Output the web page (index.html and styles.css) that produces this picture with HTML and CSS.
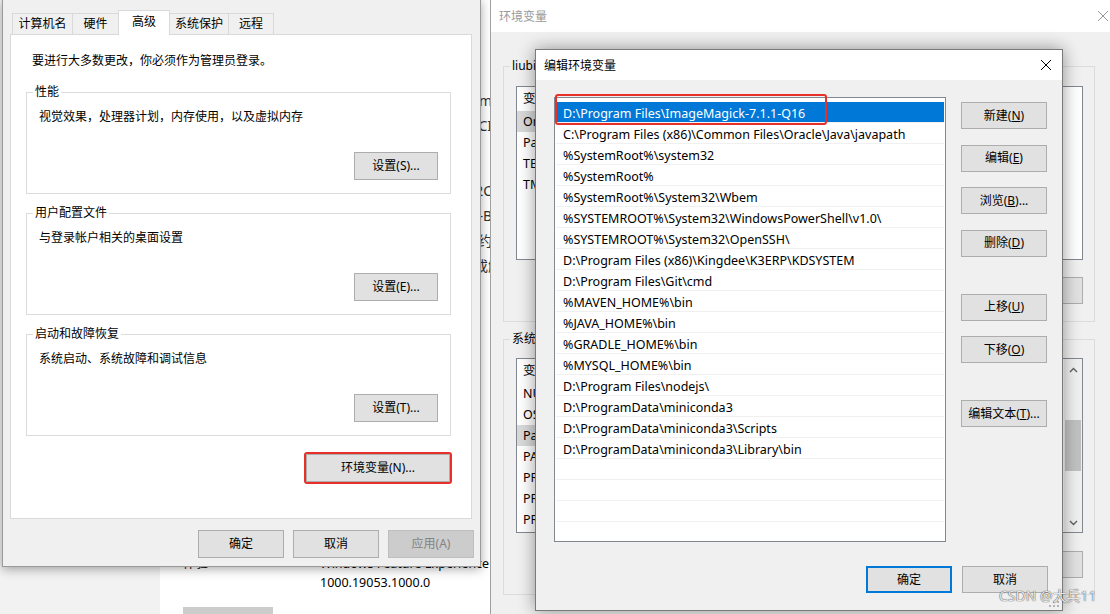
FILE: index.html
```html
<!DOCTYPE html>
<html lang="zh-CN">
<head>
    <meta charset="UTF-8">
    <meta name="viewport" content="width=device-width, initial-scale=1.0">
    <title>编辑环境变量</title>
    <link rel="stylesheet" href="styles.css">
</head>
<body>
<div class="desktop">

    <!-- Settings app behind everything -->
    <div class="settings">
        <div class="settings-nav"></div>
        <div class="settings-main">
            <div class="spec"><span class="spec-label">设备名称</span><span class="spec-value">liubing@outlook.com</span></div>
            <div class="spec"><span class="spec-label">处理器</span><span class="spec-value">2.50GHz CPU CI</span></div>
            <div class="spec spec-gap"><span class="spec-label">设备 ID</span><span class="spec-value">7A2C</span></div>
            <div class="spec"><span class="spec-label">产品 ID</span><span class="spec-value">00342-AAOEM-B</span></div>
            <div class="spec"><span class="spec-label">系统类型</span><span class="spec-value">基于 x64 的约</span></div>
            <div class="spec"><span class="spec-label">笔和触控</span><span class="spec-value">没有可用于此显示器的笔或触控成</span></div>
            <div class="experience">
                <span class="spec-label">体验</span>
                <span>Windows Feature Experience Pack<br>1000.19053.1000.0</span>
            </div>
            <div class="copy-btn"></div>
        </div>
    </div>

    <!-- System properties dialog -->
    <div class="sys-dialog">
        <div class="tabs">
            <div class="tab">计算机名</div>
            <div class="tab">硬件</div>
            <div class="tab active">高级</div>
            <div class="tab">系统保护</div>
            <div class="tab">远程</div>
        </div>
        <div class="tab-panel">
            <p class="note">要进行大多数更改，你必须作为管理员登录。</p>

            <fieldset class="group">
                <legend>性能</legend>
                <p class="group-desc">视觉效果，处理器计划，内存使用，以及虚拟内存</p>
                <div class="group-actions"><button class="btn">设置(S)...</button></div>
            </fieldset>

            <fieldset class="group">
                <legend>用户配置文件</legend>
                <p class="group-desc">与登录帐户相关的桌面设置</p>
                <div class="group-actions"><button class="btn">设置(E)...</button></div>
            </fieldset>

            <fieldset class="group">
                <legend>启动和故障恢复</legend>
                <p class="group-desc">系统启动、系统故障和调试信息</p>
                <div class="group-actions"><button class="btn">设置(T)...</button></div>
            </fieldset>

            <div class="panel-actions">
                <span class="mark"><button class="btn btn-env">环境变量(N)...</button></span>
            </div>
        </div>
        <div class="dialog-actions">
            <button class="btn btn-bottom">确定</button>
            <button class="btn btn-bottom">取消</button>
            <button class="btn btn-bottom" disabled>应用(A)</button>
        </div>
    </div>

    <!-- Environment variables window -->
    <div class="env-window">
        <div class="titlebar inactive">
            <span class="title">环境变量</span>
            <svg class="close" width="12" height="12" viewBox="0 0 12 12"><path d="M1 1L11 11M11 1L1 11" stroke="currentColor" stroke-width="1"/></svg>
        </div>
        <div class="env-body">
            <fieldset class="env-group">
                <legend>liubing 的用户变量(U)</legend>
                <div class="var-list user-list">
                    <div class="var-rows">
                        <div class="var-row head"><span>变量</span><span>值</span></div>
                        <div class="var-row picked"><span>OneDrive</span><span>C:\Users\liubing\OneDrive</span></div>
                        <div class="var-row"><span>Path</span><span>C:\Users\liubing\AppData\Local\Microsoft\WindowsApps;</span></div>
                        <div class="var-row"><span>TEMP</span><span>%USERPROFILE%\AppData\Local\Temp</span></div>
                        <div class="var-row"><span>TMP</span><span>%USERPROFILE%\AppData\Local\Temp</span></div>
                    </div>
                </div>
                <div class="var-actions">
                    <button class="btn btn-var">新建(N)...</button>
                    <button class="btn btn-var">编辑(E)...</button>
                    <button class="btn btn-var">删除(D)</button>
                </div>
            </fieldset>

            <fieldset class="env-group">
                <legend>系统变量(S)</legend>
                <div class="var-list sys-list">
                    <div class="var-rows">
                        <div class="var-row head"><span>变量</span><span>值</span></div>
                        <div class="var-row"><span>NUMBER_OF_PROCESSORS</span><span>8</span></div>
                        <div class="var-row"><span>OS</span><span>Windows_NT</span></div>
                        <div class="var-row picked"><span>Path</span><span>D:\Program Files\ImageMagick-7.1.1-Q16;C:\Program Files (x86)</span></div>
                        <div class="var-row"><span>PATHEXT</span><span>.COM;.EXE;.BAT;.CMD;.VBS;.VBE;.JS;.JSE;.WSF;.WSH;.MSC</span></div>
                        <div class="var-row"><span>PROCESSOR_ARCHITECTURE</span><span>AMD64</span></div>
                        <div class="var-row"><span>PROCESSOR_IDENTIFIER</span><span>Intel64 Family 6 Model 158 Stepping 10</span></div>
                        <div class="var-row"><span>PROCESSOR_LEVEL</span><span>6</span></div>
                    </div>
                    <div class="scrollbar">
                        <svg width="9" height="6" viewBox="0 0 9 6"><path d="M1 5L4.5 1.5L8 5" fill="none" stroke="#606060" stroke-width="1.4"/></svg>
                        <div class="track"><div class="thumb"></div></div>
                        <svg width="9" height="6" viewBox="0 0 9 6"><path d="M1 1L4.5 4.5L8 1" fill="none" stroke="#606060" stroke-width="1.4"/></svg>
                    </div>
                </div>
                <div class="var-actions">
                    <button class="btn btn-var">新建(W)...</button>
                    <button class="btn btn-var">编辑(I)...</button>
                    <button class="btn btn-var">删除(L)</button>
                </div>
            </fieldset>
        </div>
    </div>

    <!-- Edit environment variable dialog -->
    <div class="edit-dialog">
        <div class="titlebar">
            <span class="title">编辑环境变量</span>
            <svg class="close" width="12" height="12" viewBox="0 0 12 12"><path d="M1 1L11 11M11 1L1 11" stroke="currentColor" stroke-width="1"/></svg>
        </div>
        <div class="edit-body">
            <div class="edit-main">
                <div class="list-wrap">
                    <div class="path-list">
                        <div class="path-row selected">D:\Program Files\ImageMagick-7.1.1-Q16</div>
                        <div class="path-row">C:\Program Files (x86)\Common Files\Oracle\Java\javapath</div>
                        <div class="path-row">%SystemRoot%\system32</div>
                        <div class="path-row">%SystemRoot%</div>
                        <div class="path-row">%SystemRoot%\System32\Wbem</div>
                        <div class="path-row">%SYSTEMROOT%\System32\WindowsPowerShell\v1.0\</div>
                        <div class="path-row">%SYSTEMROOT%\System32\OpenSSH\</div>
                        <div class="path-row">D:\Program Files (x86)\Kingdee\K3ERP\KDSYSTEM</div>
                        <div class="path-row">D:\Program Files\Git\cmd</div>
                        <div class="path-row">%MAVEN_HOME%\bin</div>
                        <div class="path-row">%JAVA_HOME%\bin</div>
                        <div class="path-row">%GRADLE_HOME%\bin</div>
                        <div class="path-row">%MYSQL_HOME%\bin</div>
                        <div class="path-row">D:\Program Files\nodejs\</div>
                        <div class="path-row">D:\ProgramData\miniconda3</div>
                        <div class="path-row">D:\ProgramData\miniconda3\Scripts</div>
                        <div class="path-row">D:\ProgramData\miniconda3\Library\bin</div>
                        <div class="path-row"></div>
                        <div class="path-row"></div>
                        <div class="path-row"></div>
                        <div class="path-row"></div>
                    </div>
                    <div class="red-box"></div>
                </div>
                <div class="side-actions">
                    <button class="btn btn-side">新建(<u>N</u>)</button>
                    <button class="btn btn-side">编辑(<u>E</u>)</button>
                    <button class="btn btn-side">浏览(<u>B</u>)...</button>
                    <button class="btn btn-side">删除(<u>D</u>)</button>
                    <button class="btn btn-side spaced">上移(<u>U</u>)</button>
                    <button class="btn btn-side">下移(<u>O</u>)</button>
                    <button class="btn btn-side spaced">编辑文本(<u>T</u>)...</button>
                </div>
            </div>
            <div class="edit-footer">
                <button class="btn btn-side primary">确定</button>
                <button class="btn btn-side">取消</button>
            </div>
        </div>
        <svg class="grip" width="10" height="10" viewBox="0 0 10 10">
            <rect x="8" y="0" width="2" height="2" fill="#b4b4b4"/>
            <rect x="4" y="4" width="2" height="2" fill="#b4b4b4"/>
            <rect x="8" y="4" width="2" height="2" fill="#b4b4b4"/>
            <rect x="0" y="8" width="2" height="2" fill="#b4b4b4"/>
            <rect x="4" y="8" width="2" height="2" fill="#b4b4b4"/>
            <rect x="8" y="8" width="2" height="2" fill="#b4b4b4"/>
        </svg>
    </div>

    <div class="watermark">CSDN @大兵11</div>
</div>
</body>
</html>
```

FILE: styles.css
```css
* {
    box-sizing: border-box;
}
body {
    margin: 0;
}
.desktop {
    position: relative;
    width: 1110px;
    height: 614px;
    overflow: hidden;
    background: #fff;
    font-family: "Noto Sans", "Noto Sans CJK SC", sans-serif;
    font-size: 12px;
    color: #000;
}
p {
    margin: 0;
}
.btn {
    height: 28px;
    padding: 0;
    border: 1px solid #adadad;
    background: #e1e1e1;
    font: inherit;
    color: #000;
    line-height: 16px;
}
.btn:disabled {
    background: #cccccc;
    border-color: #bfbfbf;
    color: #838383;
}

/* settings app */
.settings {
    position: absolute;
    inset: 0;
    display: flex;
}
.settings-nav {
    width: 160px;
    background: #f2f2f2;
}
.settings-main {
    flex: 1;
    padding: 88px 0 0 23px;
    font-size: 14px;
    color: #333;
}
.spec {
    display: flex;
    height: 25px;
    line-height: 25px;
    white-space: nowrap;
}
.spec-gap {
    margin-top: 40px;
}
.spec-label {
    width: 137px;
    flex: none;
}
.spec-value {
    width: 172px;
    text-align: right;
    overflow: hidden;
}
.experience {
    display: flex;
    margin-top: 276px;
    font-size: 12.5px;
    line-height: 19px;
    color: #000;
}
.copy-btn {
    margin-top: 15px;
    width: 90px;
    height: 28px;
    background: #cccccc;
}

/* system properties */
.sys-dialog {
    position: absolute;
    left: 2px;
    top: -1px;
    width: 479px;
    height: 568px;
    background: #f0f0f0;
    border: 1px solid #9a9a9a;
    box-shadow: 0 2px 10px rgba(0, 0, 0, 0.35);
    padding: 10px 8px 0 7px;
}
.tabs {
    display: flex;
    align-items: flex-end;
    height: 24px;
    margin-left: 2px;
}
.tab {
    height: 21px;
    border: 1px solid #d9d9d9;
    border-bottom: none;
    margin-left: -1px;
    line-height: 19px;
    text-align: center;
    background: #f0f0f0;
}
.tab:nth-child(1) { width: 61px; margin-left: 0; }
.tab:nth-child(2) { width: 47px; }
.tab:nth-child(3) { width: 52px; }
.tab:nth-child(4) { width: 60px; }
.tab:nth-child(5) { width: 46px; }
.tab.active {
    position: relative;
    z-index: 1;
    height: 25px;
    margin-bottom: -1px;
    padding-top: 1px;
    background: #fff;
}
.tab-panel {
    height: 485px;
    background: #fff;
    border: 1px solid #d9d9d9;
    padding: 18px 20px 0 15px;
}
.note {
    line-height: 16px;
    padding-left: 6px;
    margin-bottom: 15px;
}
.group {
    margin: 11px 0 0;
    padding: 9px 12px 13px;
    border: 1px solid #dcdcdc;
    min-width: 0;
}
.note + .group {
    margin-top: 15px;
}
.group legend {
    padding: 0 2px;
    margin-left: -6px;
    line-height: 16px;
}
.group-desc {
    line-height: 16px;
}
.group-actions {
    display: flex;
    justify-content: flex-end;
    margin-top: 27px;
}
.group-actions .btn {
    width: 84px;
}
.panel-actions {
    display: flex;
    justify-content: flex-end;
    margin-top: 16px;
}
.mark {
    display: flex;
    padding: 0;
    border: 2px solid #e8302a;
    border-radius: 3px;
    margin-right: -1px;
}
.btn-env {
    width: 144px;
}
.dialog-actions {
    display: flex;
    justify-content: flex-end;
    gap: 9px;
    margin-top: 11px;
    margin-right: -2px;
}
.btn-bottom {
    width: 86px;
}

/* window chrome */
.titlebar {
    display: flex;
    justify-content: space-between;
    align-items: center;
    height: 30px;
    background: #fff;
    padding: 0 10px 0 8px;
}
.titlebar.inactive {
    height: 32px;
    color: #999;
    padding-right: 11px;
}
.close {
    color: #000;
}
.inactive .close {
    color: #999;
}

/* environment variables */
.env-window {
    position: absolute;
    left: 490px;
    top: 0;
    width: 630px;
    height: 620px;
    background: #f0f0f0;
    border-left: 1px solid #a0a0a0;
}
.env-body {
    padding: 26px 0 0 12px;
}
.env-group {
    width: 592px;
    margin: 0;
    padding: 12px 10px 17px 12px;
    border: 1px solid #dcdcdc;
    min-width: 0;
}
.env-group + .env-group {
    margin-top: 9px;
    padding-top: 11px;
    padding-bottom: 16px;
}
.env-group legend {
    padding: 0 2px;
    margin-left: -6px;
    line-height: 16px;
}
.var-list {
    display: flex;
    width: 567px;
    background: #fff;
    border: 1px solid #828790;
    overflow: hidden;
}
.user-list {
    height: 174px;
}
.sys-list {
    height: 175px;
}
.var-rows {
    flex: 1;
    overflow: hidden;
    font-size: 12.5px;
}
.var-row {
    display: flex;
    height: 21px;
    line-height: 21px;
    white-space: nowrap;
}
.var-row.head {
    height: 24px;
    line-height: 24px;
}
.var-row span:first-child {
    width: 170px;
    flex: none;
    padding-left: 6px;
}
.var-row.picked span:first-child {
    background: #d9d9d9;
}
.scrollbar {
    width: 18px;
    display: flex;
    flex-direction: column;
    align-items: center;
    padding: 8px 0 6px;
    background: #f0f0f0;
}
.track {
    flex: 1;
    width: 100%;
    padding: 47px 1px 0;
}
.thumb {
    height: 51px;
    background: #c1c1c1;
}
.var-actions {
    display: flex;
    justify-content: flex-end;
    gap: 8px;
    margin-top: 17px;
    margin-right: 1px;
}
.env-group + .env-group .var-actions {
    margin-top: 18px;
}
.btn-var {
    width: 86px;
    height: 27px;
}

/* edit dialog */
.edit-dialog {
    position: absolute;
    left: 535px;
    top: 49px;
    width: 528px;
    height: 562px;
    background: #f0f0f0;
    border: 1px solid #7a7a7a;
    box-shadow: 0 0 16px rgba(0, 0, 0, 0.4);
}
.edit-body {
    padding: 17px 14px 0 18px;
}
.edit-main {
    display: flex;
    gap: 15px;
}
.list-wrap {
    position: relative;
}
.path-list {
    width: 392px;
    height: 445px;
    padding: 4px 1px 0;
    background: #fff;
    border: 1px solid #828790;
    overflow: hidden;
}
.path-row {
    height: 21px;
    padding: 2px 0 0 7px;
    line-height: 19px;
    font-size: 12.5px;
    border-bottom: 1px solid #f0f0f0;
    white-space: nowrap;
}
.path-row.selected {
    background: #0078d7;
    color: #fff;
}
.red-box {
    position: absolute;
    left: 1px;
    top: -3px;
    width: 272px;
    height: 31px;
    border: 2px solid #e8302a;
    border-radius: 3px;
}
.side-actions {
    display: flex;
    flex-direction: column;
    padding-top: 5px;
    gap: 15.5px;
}
.btn-side {
    width: 86px;
    height: 27px;
}
.btn-side.spaced {
    margin-top: 21.5px;
}
.edit-footer {
    display: flex;
    justify-content: flex-end;
    gap: 10px;
    margin-top: 24px;
}
.btn-side.primary {
    border: 2px solid #0078d7;
}
.grip {
    position: absolute;
    right: 3px;
    bottom: 3px;
}
.watermark {
    position: absolute;
    left: 999px;
    top: 587px;
    font-size: 14px;
    line-height: 18px;
    color: rgba(255, 255, 255, 0.9);
    text-shadow: 0 0 1px rgba(0, 0, 0, 0.6), 0 0 1px rgba(0, 0, 0, 0.6);
    white-space: nowrap;
}
```
